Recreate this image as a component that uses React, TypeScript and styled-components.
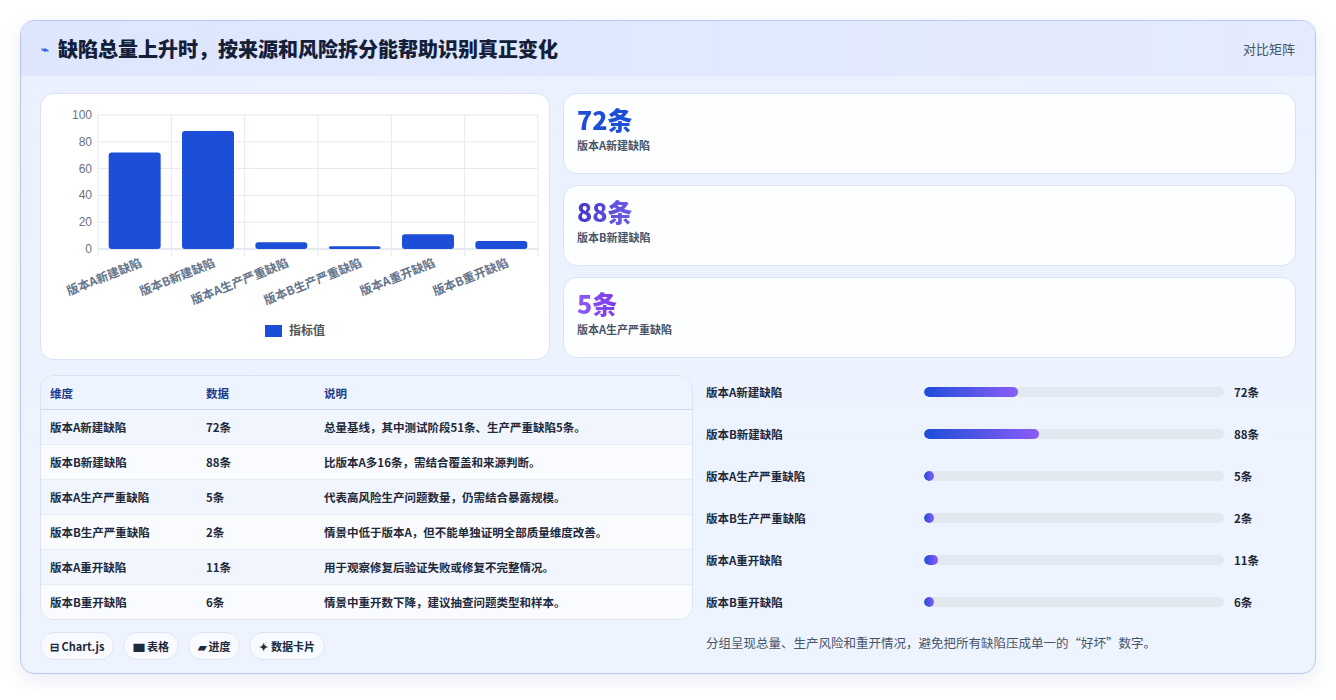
import React from "react";
import styled, { createGlobalStyle } from "styled-components";

const Global = createGlobalStyle`
  html,body{margin:0;padding:0;background:#fff;}
  body{font-family:"Noto Sans CJK SC","Noto Sans",sans-serif;}
`;

const data = [
  { name: "版本A新建缺陷", v: 72, note: "总量基线，其中测试阶段51条、生产严重缺陷5条。" },
  { name: "版本B新建缺陷", v: 88, note: "比版本A多16条，需结合覆盖和来源判断。" },
  { name: "版本A生产严重缺陷", v: 5, note: "代表高风险生产问题数量，仍需结合暴露规模。" },
  { name: "版本B生产严重缺陷", v: 2, note: "情景中低于版本A，但不能单独证明全部质量维度改善。" },
  { name: "版本A重开缺陷", v: 11, note: "用于观察修复后验证失败或修复不完整情况。" },
  { name: "版本B重开缺陷", v: 6, note: "情景中重开数下降，建议抽查问题类型和样本。" },
];

const Page = styled.div`padding:20px 20px 22px 20px;`;
const Frame = styled.div`
  border:1px solid #b9c6ef;border-radius:14px;overflow:hidden;
  background:linear-gradient(180deg,#eaf0fe 0%,#eef4ff 100%);
  box-shadow:0 6px 18px rgba(80,100,160,0.12);
`;
const Header = styled.div`
  height:55px;display:flex;align-items:center;justify-content:space-between;
  padding:0 20px;background:linear-gradient(90deg,#dde6fd,#e4ebfe);
`;
const Title = styled.h1`
  margin:0;font-size:20px;font-weight:800;color:#14203a;display:flex;align-items:center;gap:9px;
`;
const Bolt = styled.span`color:#2563eb;font-size:13px;`;
const Tag = styled.span`font-size:13px;color:#475569;`;
const Body = styled.div`padding:17px 19px 13px 19px;display:flex;flex-direction:column;gap:15px;`;
const Row = styled.div`display:grid;grid-template-columns:510px 1fr;gap:13px;`;
const Row2 = styled.div`display:grid;grid-template-columns:653px 1fr;gap:13px;`;
const Panel = styled.div`background:#fff;border:1px solid #dbe3f3;border-radius:14px;`;
const ChartPanel = styled(Panel)`height:265px;`;
const Cards = styled.div`display:flex;flex-direction:column;gap:11px;`;
const Card = styled(Panel)`height:81px;box-sizing:border-box;padding:9px 13px;background:#fdfeff;`;
const Big = styled.div<{ $c: string }>`
  font-size:25px;font-weight:800;line-height:32px;background:${(p) => p.$c};
  -webkit-background-clip:text;background-clip:text;color:transparent;display:inline-block;
`;
const CardLabel = styled.div`font-size:11px;color:#475569;font-weight:600;margin-top:2px;`;

const Table = styled.table`
  width:100%;border-collapse:collapse;font-size:11.5px;color:#1e293b;font-weight:600;
`;
const TableWrap = styled(Panel)`overflow:hidden;background:#f8fafc;`;
const Th = styled.th`text-align:left;color:#1e3a8a;font-weight:700;height:33px;padding:0 9px;background:#eef4ff;border-bottom:1px solid #cfd9ec;`;
const Td = styled.td<{ $alt: boolean }>`height:34px;padding:0 9px;border-top:1px solid #e6ecf5;background:${(p) => (p.$alt ? "#f1f5fd" : "#f9fbfe")};`;

const Pills = styled.div`display:flex;gap:9px;margin-top:12px;`;
const Pill = styled.span`
  font-size:11px;font-weight:600;color:#1e293b;background:#f8faff;border:1px solid #dde4f2;border-radius:14px;
  height:26px;padding:0 9px;display:inline-flex;align-items:center;
`;
const Bars = styled.div`display:flex;flex-direction:column;margin-top:-4px;`;
const BarRow = styled.div`display:grid;grid-template-columns:208px 300px 1fr;gap:10px;align-items:center;height:42px;font-size:11.5px;font-weight:700;color:#1e293b;`;
const Track = styled.div`height:10px;border-radius:5px;background:#e2e8f0;overflow:hidden;`;
const Fill = styled.div`height:100%;border-radius:5px;background:linear-gradient(90deg,#1d4ed8,#8b5cf6);`;
const Foot = styled.div`font-size:12.5px;color:#475569;margin-top:10px;`;

function Chart() {
  const x0 = 57, x1 = 497, y0 = 21, y1 = 155;
  const cw = (x1 - x0) / 6;
  return (
    <svg width="509" height="265" style={{ display: "block" }}>
      {[0, 20, 40, 60, 80, 100].map((t) => {
        const y = y1 - (t / 100) * (y1 - y0);
        return (
          <g key={t}>
            <line x1={x0} x2={x1} y1={y} y2={y} stroke={t === 0 ? "#cbd5e1" : "#e5e9f0"} />
            <text x={x0 - 6} y={y + 4} fontSize="12" fill="#6b7280" textAnchor="end" fontFamily="Liberation Sans">{t}</text>
          </g>
        );
      })}
      {Array.from({ length: 7 }).map((_, i) => (
        <line key={i} x1={x0 + i * cw} x2={x0 + i * cw} y1={y0} y2={y1 + 7} stroke="#e5e9f0" />
      ))}
      {data.map((d, i) => {
        const h = (d.v / 100) * (y1 - y0);
        const cx = x0 + cw * i + cw / 2;
        return (
          <g key={d.name}>
            <rect x={cx - 26} y={y1 - h} width={52} height={h} rx={3} fill="#1d4ed8" />
            <text transform={`translate(${cx + 8},${y1 + 17}) rotate(-22)`} fontSize="12" fontWeight="600" fill="#64748b" textAnchor="end">{d.name}</text>
          </g>
        );
      })}
      <rect x={224} y={231} width={17} height={12} fill="#1d4ed8" />
      <text x={248} y={241} fontSize="12" fill="#555" fontWeight="600">指标值</text>
    </svg>
  );
}

export default function App() {
  const grads = ["#1d4ed8", "linear-gradient(90deg,#4338ca,#6d5ce8)", "linear-gradient(90deg,#8b5cf6,#7c3aed)"];
  return (
    <Page>
      <Global />
      <Frame>
        <Header>
          <Title><Bolt>⌁</Bolt>缺陷总量上升时，按来源和风险拆分能帮助识别真正变化</Title>
          <Tag>对比矩阵</Tag>
        </Header>
        <Body>
          <Row>
            <ChartPanel><Chart /></ChartPanel>
            <Cards>
              {data.slice(0, 3).map((d, i) => (
                <Card key={d.name}>
                  <Big $c={grads[i]}>{d.v}条</Big>
                  <CardLabel>{d.name}</CardLabel>
                </Card>
              ))}
            </Cards>
          </Row>
          <Row2>
            <div>
              <TableWrap>
                <Table>
                  <thead>
                    <tr><Th style={{ width: 138 }}>维度</Th><Th style={{ width: 100 }}>数据</Th><Th>说明</Th></tr>
                  </thead>
                  <tbody>
                    {data.map((d, i) => (
                      <tr key={d.name}>
                        <Td $alt={i % 2 === 0}>{d.name}</Td>
                        <Td $alt={i % 2 === 0}>{d.v}条</Td>
                        <Td $alt={i % 2 === 0}>{d.note}</Td>
                      </tr>
                    ))}
                  </tbody>
                </Table>
              </TableWrap>
              <Pills>
                <Pill>⊟ Chart.js</Pill><Pill>▆ 表格</Pill><Pill>▰ 进度</Pill><Pill>✦ 数据卡片</Pill>
              </Pills>
            </div>
            <div>
              <Bars>
                {data.map((d) => (
                  <BarRow key={d.name}>
                    <span>{d.name}</span>
                    <Track><Fill style={{ width: `${Math.max(3.3, (d.v / 230) * 100)}%` }} /></Track>
                    <span>{d.v}条</span>
                  </BarRow>
                ))}
              </Bars>
              <Foot>分组呈现总量、生产风险和重开情况，避免把所有缺陷压成单一的“好坏”数字。</Foot>
            </div>
          </Row2>
        </Body>
      </Frame>
    </Page>
  );
}
